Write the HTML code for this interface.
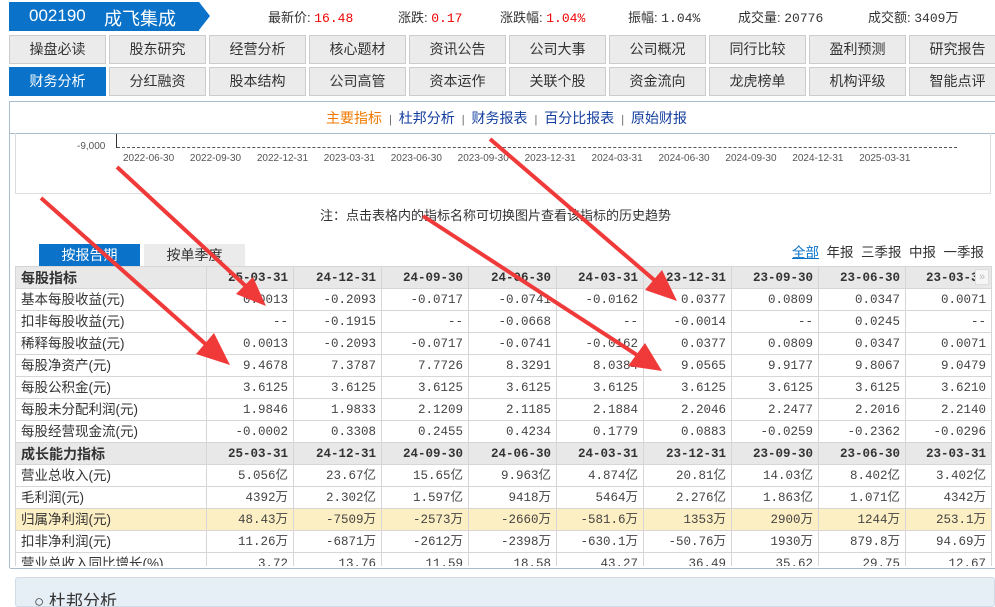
<!DOCTYPE html>
<html><head><meta charset="utf-8"><style>
*{margin:0;padding:0;box-sizing:border-box}
body{width:995px;height:597px;overflow:hidden;background:#fff;font-family:"Liberation Sans","Noto Sans CJK SC",sans-serif;font-size:13px;color:#333;position:relative}
.abs{position:absolute}
.tag{left:9px;top:2px;width:190px;height:29px;background:#0a72c9;color:#fff}
.tag span{position:absolute;top:3px;font-size:18px}
.tag:after{content:"";position:absolute;right:-11px;top:0;border-left:11px solid #0a72c9;border-top:14.5px solid transparent;border-bottom:14.5px solid transparent}
.q{top:7px;font-size:13px;color:#333}
.q b{font-weight:normal;color:#e00;font-family:"Liberation Mono",monospace}
.q i{font-style:normal;font-family:"Liberation Mono",monospace}
.btn{position:absolute;width:97px;height:29px;background:#ebebeb;border:1px solid #ccc;text-align:center;line-height:27px;font-size:14px;color:#333}
.btn.on{background:#0a72c9;color:#fff;border-color:#0a72c9}
.panel{left:9px;top:101px;width:990px;height:467px;border:1px solid #a8bccb;border-bottom:none}
table{position:absolute;left:15px;top:266px;border-collapse:collapse;font-size:13px}
td{border:1px solid #d6d6d6;height:22px;line-height:20px;padding:0 5px;text-align:right;font-family:"Liberation Mono","Noto Sans CJK SC",monospace;font-size:12.5px;white-space:nowrap;overflow:hidden;color:#444}
td:first-child{text-align:left;font-family:"Liberation Sans","Noto Sans CJK SC",sans-serif;font-size:13.5px;width:191px;color:#333}
tr.h td{background:#e8e8e8;font-weight:bold;color:#333}
tr.h td:first-child{font-size:14px}
tr.y td{background:#fdefc4}
</style></head><body>
<div class="abs tag"><span style="left:20px;font-family:'Liberation Sans',sans-serif;font-size:17px;top:4px">002190</span><span style="left:95px">成飞集成</span></div>
<div class="abs q" style="left:268px">最新价: <b>16.48</b></div>
<div class="abs q" style="left:398px">涨跌: <b>0.17</b></div>
<div class="abs q" style="left:500px">涨跌幅: <b>1.04%</b></div>
<div class="abs q" style="left:628px">振幅: <i>1.04%</i></div>
<div class="abs q" style="left:738px">成交量: <i>20776</i></div>
<div class="abs q" style="left:868px">成交额: <i>3409</i>万</div>
<div class="btn" style="left:9px;top:35px">操盘必读</div><div class="btn" style="left:109px;top:35px">股东研究</div><div class="btn" style="left:209px;top:35px">经营分析</div><div class="btn" style="left:309px;top:35px">核心题材</div><div class="btn" style="left:409px;top:35px">资讯公告</div><div class="btn" style="left:509px;top:35px">公司大事</div><div class="btn" style="left:609px;top:35px">公司概况</div><div class="btn" style="left:709px;top:35px">同行比较</div><div class="btn" style="left:809px;top:35px">盈利预测</div><div class="btn" style="left:909px;top:35px">研究报告</div>
<div class="btn on" style="left:9px;top:67px">财务分析</div><div class="btn" style="left:109px;top:67px">分红融资</div><div class="btn" style="left:209px;top:67px">股本结构</div><div class="btn" style="left:309px;top:67px">公司高管</div><div class="btn" style="left:409px;top:67px">资本运作</div><div class="btn" style="left:509px;top:67px">关联个股</div><div class="btn" style="left:609px;top:67px">资金流向</div><div class="btn" style="left:709px;top:67px">龙虎榜单</div><div class="btn" style="left:809px;top:67px">机构评级</div><div class="btn" style="left:909px;top:67px">智能点评</div>
<div class="abs panel"></div>
<div class="abs" style="left:10px;top:133px;width:985px;border-top:1px solid #a8bccb"></div>
<div class="abs" style="left:326px;top:108px;font-size:14px;color:#133e9e;white-space:nowrap"><span style="color:#f07800">主要指标</span> <span style="color:#666;font-size:11px">&nbsp;|&nbsp;</span> 杜邦分析 <span style="color:#666;font-size:11px">&nbsp;|&nbsp;</span> 财务报表 <span style="color:#666;font-size:11px">&nbsp;|&nbsp;</span> 百分比报表 <span style="color:#666;font-size:11px">&nbsp;|&nbsp;</span> 原始财报</div>
<div class="abs" style="left:15px;top:133px;width:976px;height:61px;border:1px solid #ddd;border-top:none"></div>
<div class="abs" style="left:116px;top:134px;height:14px;border-left:1px solid #333"></div>
<div class="abs" style="left:117px;top:147px;width:840px;border-top:1px dashed #555"></div>
<div class="abs" style="left:77px;top:141px;font-size:10px;color:#555">-9,000</div>
<div class="abs" style="left:123px;top:153px;font-size:10px;color:#555;word-spacing:13px;white-space:nowrap">2022-06-30 2022-09-30 2022-12-31 2023-03-31 2023-06-30 2023-09-30 2023-12-31 2024-03-31 2024-06-30 2024-09-30 2024-12-31 2025-03-31</div>
<div class="abs" style="left:320px;top:205px;font-size:13px;color:#333">注：点击表格内的指标名称可切换图片查看该指标的历史趋势</div>
<div class="abs" style="left:39px;top:244px;width:101px;height:22px;background:#0a72c9;color:#fff;text-align:center;line-height:22px;font-size:14px">按报告期</div>
<div class="abs" style="left:144px;top:244px;width:101px;height:22px;background:#ebebeb;color:#333;text-align:center;line-height:22px;font-size:14px">按单季度</div>
<div class="abs" style="left:792px;top:241px;font-size:13.5px;color:#333;white-space:nowrap"><u style="color:#0a72c9">全部</u>&nbsp; 年报&nbsp; 三季报&nbsp; 中报&nbsp; 一季报</div>
<div class="abs" style="left:15px;top:266px;width:978px;height:300px;overflow:hidden">
<table style="left:0;top:0">
<colgroup><col style="width:191px"><col style="width:87px"><col style="width:88px"><col style="width:87px"><col style="width:88px"><col style="width:87px"><col style="width:88px"><col style="width:87px"><col style="width:87px"><col style="width:86px"></colgroup>
<tr class="h"><td>每股指标</td><td>25-03-31</td><td>24-12-31</td><td>24-09-30</td><td>24-06-30</td><td>24-03-31</td><td>23-12-31</td><td>23-09-30</td><td>23-06-30</td><td>23-03-31</td></tr>
<tr><td>基本每股收益(元)</td><td>0.0013</td><td>-0.2093</td><td>-0.0717</td><td>-0.0741</td><td>-0.0162</td><td>0.0377</td><td>0.0809</td><td>0.0347</td><td>0.0071</td></tr>
<tr><td>扣非每股收益(元)</td><td>--</td><td>-0.1915</td><td>--</td><td>-0.0668</td><td>--</td><td>-0.0014</td><td>--</td><td>0.0245</td><td>--</td></tr>
<tr><td>稀释每股收益(元)</td><td>0.0013</td><td>-0.2093</td><td>-0.0717</td><td>-0.0741</td><td>-0.0162</td><td>0.0377</td><td>0.0809</td><td>0.0347</td><td>0.0071</td></tr>
<tr><td>每股净资产(元)</td><td>9.4678</td><td>7.3787</td><td>7.7726</td><td>8.3291</td><td>8.0384</td><td>9.0565</td><td>9.9177</td><td>9.8067</td><td>9.0479</td></tr>
<tr><td>每股公积金(元)</td><td>3.6125</td><td>3.6125</td><td>3.6125</td><td>3.6125</td><td>3.6125</td><td>3.6125</td><td>3.6125</td><td>3.6125</td><td>3.6210</td></tr>
<tr><td>每股未分配利润(元)</td><td>1.9846</td><td>1.9833</td><td>2.1209</td><td>2.1185</td><td>2.1884</td><td>2.2046</td><td>2.2477</td><td>2.2016</td><td>2.2140</td></tr>
<tr><td>每股经营现金流(元)</td><td>-0.0002</td><td>0.3308</td><td>0.2455</td><td>0.4234</td><td>0.1779</td><td>0.0883</td><td>-0.0259</td><td>-0.2362</td><td>-0.0296</td></tr>
<tr class="h"><td>成长能力指标</td><td>25-03-31</td><td>24-12-31</td><td>24-09-30</td><td>24-06-30</td><td>24-03-31</td><td>23-12-31</td><td>23-09-30</td><td>23-06-30</td><td>23-03-31</td></tr>
<tr><td>营业总收入(元)</td><td>5.056亿</td><td>23.67亿</td><td>15.65亿</td><td>9.963亿</td><td>4.874亿</td><td>20.81亿</td><td>14.03亿</td><td>8.402亿</td><td>3.402亿</td></tr>
<tr><td>毛利润(元)</td><td>4392万</td><td>2.302亿</td><td>1.597亿</td><td>9418万</td><td>5464万</td><td>2.276亿</td><td>1.863亿</td><td>1.071亿</td><td>4342万</td></tr>
<tr class="y"><td>归属净利润(元)</td><td>48.43万</td><td>-7509万</td><td>-2573万</td><td>-2660万</td><td>-581.6万</td><td>1353万</td><td>2900万</td><td>1244万</td><td>253.1万</td></tr>
<tr><td>扣非净利润(元)</td><td>11.26万</td><td>-6871万</td><td>-2612万</td><td>-2398万</td><td>-630.1万</td><td>-50.76万</td><td>1930万</td><td>879.8万</td><td>94.69万</td></tr>
<tr><td>营业总收入同比增长(%)</td><td>3.72</td><td>13.76</td><td>11.59</td><td>18.58</td><td>43.27</td><td>36.49</td><td>35.62</td><td>29.75</td><td>12.67</td></tr>
</table></div>
<div class="abs" style="left:975px;top:269px;width:14px;height:16px;border:1px solid #ddd;background:#f6f6f6;color:#bbb;font-size:11px;line-height:14px;text-align:center">»</div>
<div class="abs" style="left:10px;top:568px;width:985px;border-top:1px solid #a8bccb"></div>
<div class="abs" style="left:15px;top:577px;width:980px;height:30px;background:#e6eef6;border:1px solid #cfdbe6;border-radius:3px;overflow:hidden"><div class="abs" style="left:18px;top:9px;font-size:17px;color:#333;white-space:nowrap">○ 杜邦分析</div></div>
<svg class="abs" style="left:0;top:0" width="995" height="597">
<g stroke="#f03a3a" stroke-width="4" fill="#f03a3a">
<line x1="117" y1="167" x2="250" y2="290"/><polygon points="266,306 236,294 253,277" stroke="none"/>
<line x1="41" y1="198" x2="210" y2="348"/><polygon points="230,365 196,354 214,333" stroke="none"/>
<line x1="423" y1="216" x2="640" y2="357"/><polygon points="662,371 628,366 645,343" stroke="none"/>
<line x1="490" y1="139" x2="660" y2="285"/><polygon points="677,301 645,290 662,270" stroke="none"/>
</g></svg>
</body></html>
